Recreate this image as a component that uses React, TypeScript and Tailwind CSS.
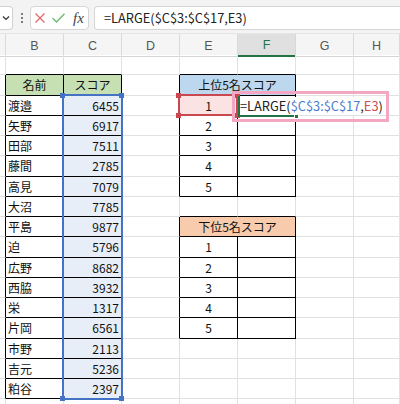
import React from 'react';

const ROW_H = 20.25;
const ROWS = 18;

const names = ['渡邉', '矢野', '田部', '藤間', '高見', '大沼', '平島', '迫', '広野', '西脇', '栄', '片岡', '市野', '吉元', '粕谷'];
const scores = [6455, 6917, 7511, 2785, 7079, 7785, 9877, 5796, 8682, 3932, 1317, 6561, 2113, 5236, 2397];

// cells that sit inside a bordered table: [row, col] with col 0 = A
const inTable = (r: number, c: number) => {
  if (r >= 2 && r <= 17 && (c === 1 || c === 2)) return true;
  if (r >= 2 && r <= 7 && (c === 4 || c === 5)) return true;
  if (r >= 9 && r <= 14 && (c === 4 || c === 5)) return true;
  return false;
};

type CellInfo = { text?: string; cls?: string; span?: number; skip?: boolean };

const cellAt = (r: number, c: number): CellInfo => {
  if (r === 2 && c === 1) return { text: '名前', cls: 'bg-[#c6e0b4] justify-center' };
  if (r === 2 && c === 2) return { text: 'スコア', cls: 'bg-[#c6e0b4] justify-center' };
  if (r >= 3 && r <= 17 && c === 1) return { text: names[r - 3], cls: 'justify-start pl-[2px]' };
  if (r >= 3 && r <= 17 && c === 2) return { text: String(scores[r - 3]), cls: 'bg-[#e8eef8] justify-end pr-[2px]' };
  if (r === 2 && c === 4) return { text: '上位5名スコア', cls: 'bg-[#bdd7ee] justify-center', span: 2 };
  if (r === 9 && c === 4) return { text: '下位5名スコア', cls: 'bg-[#f8cbad] justify-center', span: 2 };
  if ((r === 2 || r === 9) && c === 5) return { skip: true };
  if (r === 3 && c === 4) return { text: '1', cls: 'bg-[#fbe3e4] justify-center' };
  if (r >= 4 && r <= 7 && c === 4) return { text: String(r - 2), cls: 'justify-center' };
  if (r >= 10 && r <= 14 && c === 4) return { text: String(r - 9), cls: 'justify-center' };
  return {};
};

function Toolbar() {
  return (
    <div className="h-[34px] bg-[#f3f3f3] flex items-start pt-[6px] border-b border-b-[#e6e6e6]">
      <div className="h-[24px] w-[13px] bg-white border border-l-0 border-[#d2d2d2] rounded-r-[4px] flex items-center justify-end pr-[2px]">
        <svg width="8" height="6" viewBox="0 0 8 6">
          <polyline points="1,1.5 4,4.5 7,1.5" fill="none" stroke="#333" strokeWidth="1.2" />
        </svg>
      </div>
      <div className="w-[17px] h-[24px] flex flex-col items-center justify-center gap-[2px]">
        <span className="w-[2px] h-[2px] bg-[#555] rounded-full" />
        <span className="w-[2px] h-[2px] bg-[#555] rounded-full" />
        <span className="w-[2px] h-[2px] bg-[#555] rounded-full" />
      </div>
      <div className="h-[24px] w-[59px] bg-white border border-[#d6d6d6] rounded-[4px] flex items-center pl-[4px]">
        <svg width="10" height="10" viewBox="0 0 10 10">
          <line x1="0.5" y1="0.5" x2="9.5" y2="9.5" stroke="#e06a6a" strokeWidth="1.3" />
          <line x1="9.5" y1="0.5" x2="0.5" y2="9.5" stroke="#e06a6a" strokeWidth="1.3" />
        </svg>
        <svg className="ml-[7px]" width="13" height="10" viewBox="0 0 13 10">
          <polyline points="0.5,5 4.5,9 12.5,0.7" fill="none" stroke="#6cb96c" strokeWidth="1.3" />
        </svg>
        <span className="ml-[8px] font-['Liberation_Serif',serif] italic text-[15px] leading-none text-[#444]">fx</span>
      </div>
      <div className="ml-[5px] h-[24px] flex-1 bg-white border border-r-0 border-[#d6d6d6] rounded-l-[4px] flex items-center pl-[9px] text-[12.8px] text-[#222]">
        =LARGE($C$3:$C$17,E3)
      </div>
    </div>
  );
}

function ColumnHeaders() {
  const letters = ['', 'B', 'C', 'D', 'E', 'F', 'G', 'H'];
  return (
    <div className="grid grid-cols-[6px_58px_58px_58px_58px_58px_58px_1fr] h-[21px] bg-[#f5f5f5] font-['Liberation_Sans',sans-serif] text-[12.5px] text-[#555]">
      {letters.map((l, i) =>
        l === 'F' ? (
          <div key={i} className="bg-[#e0e0e0] border-r border-r-[#d8d8d8] border-b-2 border-b-[#217346] text-[#217346] flex items-center justify-center pt-[2px]">
            {l}
          </div>
        ) : (
          <div key={i} className="border-r border-r-[#dadada] border-b border-b-[#d4d4d4] flex items-center justify-center pt-[2px]">
            {l}
          </div>
        )
      )}
    </div>
  );
}

function Sheet() {
  const cells: React.ReactNode[] = [];
  for (let r = 1; r <= ROWS; r++) {
    for (let c = 0; c < 8; c++) {
      const info = cellAt(r, c);
      if (info.skip) continue;
      const span = info.span ?? 1;
      const lastCol = c + span - 1;
      const rightBlack = inTable(r, lastCol) || inTable(r, lastCol + 1);
      const bottomBlack = inTable(r, c) || inTable(r + 1, c);
      cells.push(
        <div
          key={`${r}-${c}`}
          className={[
            'flex items-center border-r border-b overflow-hidden whitespace-nowrap pt-[1px]',
            rightBlack ? 'border-r-black' : 'border-r-[#e1e1e1]',
            bottomBlack ? 'border-b-black' : 'border-b-[#e1e1e1]',
            span === 2 ? 'col-span-2' : '',
            info.cls ?? '',
          ].join(' ')}
        >
          {info.text}
        </div>
      );
    }
  }

  const row3Top = 2 * ROW_H;
  const row17Bottom = 17 * ROW_H;

  return (
    <div className="relative">
      <div className="grid grid-cols-[6px_58px_58px_58px_58px_58px_58px_1fr] auto-rows-[20.25px]">{cells}</div>

      {/* selected range C3:C17 */}
      <div
        className="absolute border-2 border-[#4472c4] pointer-events-none"
        style={{ left: 62, top: row3Top - 1.5, width: 61, height: row17Bottom - row3Top + 2.5 }}
      />
      {[
        [63, row3Top - 0.5],
        [122, row3Top - 0.5],
        [63, row17Bottom - 0.5],
        [122, row17Bottom - 0.5],
      ].map(([x, y], i) => (
        <div key={i} className="absolute w-[5px] h-[5px] bg-[#4472c4]" style={{ left: x - 3, top: y - 2.5 }} />
      ))}

      {/* referenced cell E3 */}
      <div
        className="absolute border-2 border-[#c9474f]"
        style={{ left: 177.5, top: row3Top - 1.5, width: 60.5, height: ROW_H + 2 }}
      />
      {[
        [178.5, row3Top - 0.5],
        [237, row3Top - 0.5],
        [178.5, row3Top + ROW_H],
        [237, row3Top + ROW_H],
      ].map(([x, y], i) => (
        <div key={i} className="absolute w-[5px] h-[5px] bg-[#c9474f]" style={{ left: x - 2.5, top: y - 2.5 }} />
      ))}

      {/* active cell F3 in edit mode */}
      <div
        className="absolute bg-white flex items-center pl-[2px] text-[12.8px] whitespace-nowrap"
        style={{ left: 238, top: row3Top + 1, width: 148, height: ROW_H - 2 }}
      >
        <span className="text-[#222]">=LARGE(</span>
        <span className="text-[#4a7bd0]">$C$3:$C$17</span>
        <span className="text-[#222]">,</span>
        <span className="text-[#c8504f]">E3</span>
        <span className="text-[#222]">)</span>
      </div>
      <div className="absolute bg-[#217346]" style={{ left: 238, top: row3Top, width: 2, height: ROW_H + 1 }} />
      <div className="absolute bg-[#217346]" style={{ left: 238, top: row3Top + ROW_H - 0.5, width: 58, height: 2 }} />
      <div className="absolute w-[5px] h-[5px] bg-[#217346] border border-white" style={{ left: 294, top: row3Top + ROW_H - 2 }} />

      {/* annotation frame */}
      <div className="absolute border-[3px] border-[#f4a7c3]" style={{ left: 232, top: 36, width: 157, height: 31 }} />
    </div>
  );
}

export default function App() {
  return (
    <div className="w-[400px] h-[404px] overflow-hidden bg-white font-['Noto_Sans_CJK_JP','Noto_Sans',sans-serif] text-[12px] text-[#111]">
      <Toolbar />
      <ColumnHeaders />
      <Sheet />
    </div>
  );
}
